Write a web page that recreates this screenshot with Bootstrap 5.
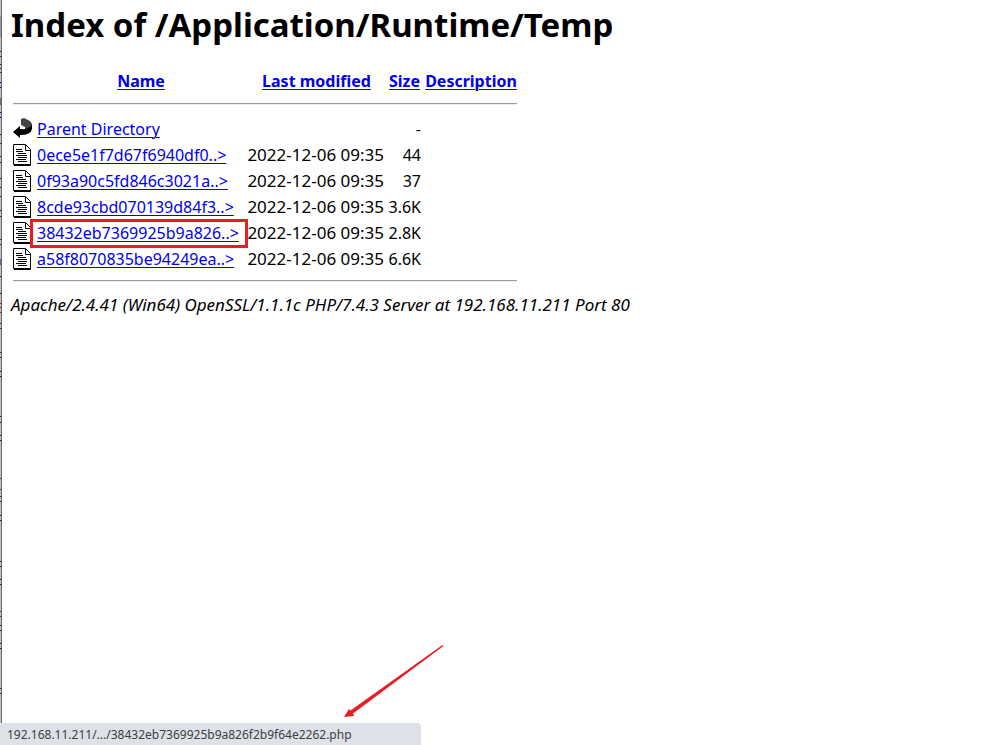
<!DOCTYPE html>
<html lang="en">
<head>
<meta charset="utf-8">
<meta name="viewport" content="width=device-width, initial-scale=1">
<title>Index of /Application/Runtime/Temp</title>
<link href="https://cdn.jsdelivr.net/npm/bootstrap@5.3.0/dist/css/bootstrap.min.css" rel="stylesheet">
<style>
body { font-family: "Noto Sans", "Open Sans", sans-serif; font-size: 16px; line-height: 26px; color: #000; background: #fff; }
a { color: #00e; text-decoration: underline; text-underline-offset: 2px; text-decoration-thickness: 1px; }
.edge { width: 2px; background: #c3c3c5; }
.page-body { padding: 3px 9px; }
h1 { font-size: 33px; line-height: 44px; margin-bottom: 21px; }
.listing { width: 508px; table-layout: fixed; border-collapse: collapse; }
.listing th, .listing td { height: 26px; padding: 0 2px; white-space: nowrap; vertical-align: middle; }
.listing .stamp { font-size: 17px; line-height: 24px; padding-left: 0; }
.listing .rule td { height: 22px; }
.listing .rule:last-child td { height: 20px; }
.listing hr { margin: 0 0 2px; border: 0; border-top: 1px solid #9a9a9a; border-bottom: 1px solid #eee; opacity: 1; height: 2px; }
.c-icon { width: 24px; } .c-name { width: 212px; } .c-date { width: 139px; } .c-size { width: 37px; }
.listing svg { display: block; width: 20px; height: 22px; }
.marker { inset: -1px -1px -2px -5px; border: 3px solid #ed1c24; pointer-events: none; }
address { font-size: 17px; }
.status { width: 421px; height: 22px; padding-left: 7px; font-size: 12px; line-height: 24px; background: #dee1e6; color: #3c4043; border-top-right-radius: 4px; }
.arrow { left: 344px; bottom: 28px; width: 100px; height: 72px; }
</style>
</head>
<body>
<svg width="0" height="0" class="position-absolute" aria-hidden="true">
  <symbol id="doc" viewBox="0 0 20 22">
    <path d="M0.500 0.500H12.500L17.500 5.500V20.500H0.500Z" fill="#fff" stroke="#000"/>
    <path d="M17.500 6V21.500H1" fill="none" stroke="#000"/>
    <path d="M12.500 1V6.500H17" fill="none" stroke="#000"/>
    <path d="M3 5.500H9M3 7.500H10M5 9.500H13M3 11.500H14M5 13.500H14M3 15.500H13M5 17.500H14" stroke="#000"/>
  </symbol>
</svg>
<div class="d-flex min-vh-100">
  <svg class="edge flex-shrink-0" viewBox="0 0 2 745" preserveAspectRatio="none" aria-hidden="true">
    <path d="M0 16h2v21h-2z" fill="#999"/>
    <path d="M0 51.500h2M0 56.500h2M0 64.500h2M0 68.500h2M0 72.500h2M0 98v7M0 134.500h2M0 143.500h2M0 156.500h2M0 162.500h2M0 178.500h2M0 187.500h2M0 196.500h2M0 210.500h2M0 216.500h2M0 239.500h2M0 244.500h2M0 323.500h2M0 328.500h2M0 352.500h2M0 357.500h2M0 416.500h2M0 422.500h2M0 496.500h2M0 501.500h2M0 561.500h2M0 566.500h2M0 625.500h2M0 630.500h2M0 688.500h2M0 693.500h2" stroke="#222" fill="none"/>
    <path d="M0 82.500h2M0 87.500h2M0 112.500h2M0 117.500h2M0 259v6M0 276.500h2M0 293.500h2M0 371.500h2M0 376.500h2M0 435.500h2M0 440.500h2M0 515.500h2M0 520.500h2M0 579.500h2M0 584.500h2M0 643.500h2M0 648.500h2" stroke="#009" fill="none"/>
    <path d="M0 303.500h2M0 307.500h2M0 312.500h2M0 478.500h2M0 489.500h2M0 611.500h2M0 616.500h2" stroke="#a11" fill="none"/>
    <path d="M1.500 0V745" stroke="#666"/>
  </svg>
  <main class="page-body flex-grow-1">
    <h1 class="fw-bold">Index of /Application/Runtime/Temp</h1>
    <table class="listing">
      <colgroup><col class="c-icon"><col class="c-name"><col class="c-date"><col class="c-size"><col></colgroup>
      <thead>
        <tr><th></th><th class="text-center"><a href="#">Name</a></th><th class="text-center"><a href="#">Last modified</a></th><th class="text-center"><a href="#">Size</a></th><th class="text-center"><a href="#">Description</a></th></tr>
      </thead>
      <tbody>
        <tr class="rule"><td colspan="5"><hr></td></tr>
        <tr>
          <td><svg viewBox="0 0 20 22" role="img" aria-label="Back"><path d="M8 1L11 0L17 3L19 6V9Q18 13 13 14H9V12H12V9L8 7Z" fill="#444"/><path d="M0 14L7 8V11Q15 12 19 7V11Q18 17 7 17V20Z" fill="#000"/></svg></td>
          <td><a href="#">Parent Directory</a></td><td></td><td class="text-end">-</td><td></td>
        </tr>
        <tr><td><svg role="img" aria-label="Text"><use href="#doc"/></svg></td><td><a href="#">0ece5e1f7d67f6940df0..&gt;</a></td><td class="stamp text-end">2022-12-06 09:35</td><td class="text-end">44</td><td></td></tr>
        <tr><td><svg role="img" aria-label="Text"><use href="#doc"/></svg></td><td><a href="#">0f93a90c5fd846c3021a..&gt;</a></td><td class="stamp text-end">2022-12-06 09:35</td><td class="text-end">37</td><td></td></tr>
        <tr><td><svg role="img" aria-label="Text"><use href="#doc"/></svg></td><td><a href="#">8cde93cbd070139d84f3..&gt;</a></td><td class="stamp text-end">2022-12-06 09:35</td><td class="text-end">3.6K</td><td></td></tr>
        <tr><td><svg role="img" aria-label="Text"><use href="#doc"/></svg></td><td class="position-relative"><a href="#">38432eb7369925b9a826..&gt;</a><span class="marker position-absolute"></span></td><td class="stamp text-end">2022-12-06 09:35</td><td class="text-end">2.8K</td><td></td></tr>
        <tr><td><svg role="img" aria-label="Text"><use href="#doc"/></svg></td><td><a href="#">a58f8070835be94249ea..&gt;</a></td><td class="stamp text-end">2022-12-06 09:35</td><td class="text-end">6.6K</td><td></td></tr>
        <tr class="rule"><td colspan="5"><hr></td></tr>
      </tbody>
    </table>
    <address class="fst-italic mb-0">Apache/2.4.41 (Win64) OpenSSL/1.1.1c PHP/7.4.3 Server at 192.168.11.211 Port 80</address>
  </main>
</div>
<footer class="status position-fixed start-0 bottom-0">192.168.11.211/.../38432eb7369925b9a826f2b9f64e2262.php
  <svg class="arrow position-absolute" viewBox="0 0 100 72" aria-hidden="true"><path d="M98.500 0L99.500 1L9 68.500L10 71L0 72L5 64L6.500 65.500Z" fill="#ed1c24"/></svg>
</footer>
<script src="https://cdn.jsdelivr.net/npm/bootstrap@5.3.0/dist/js/bootstrap.bundle.min.js"></script>
</body>
</html>
